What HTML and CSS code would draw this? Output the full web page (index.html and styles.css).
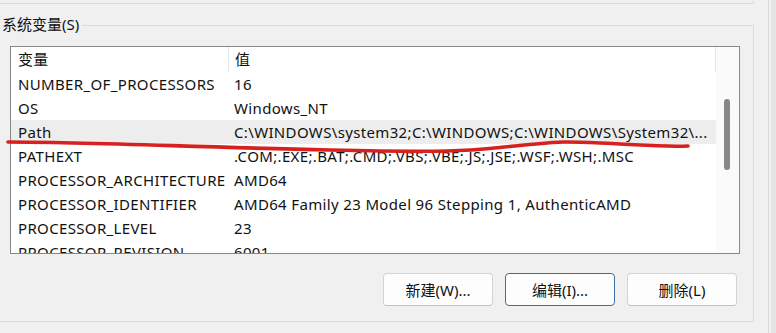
FILE: index.html
```html
<!DOCTYPE html>
<html lang="zh-CN">
<head>
<meta charset="utf-8">
<title>系统变量</title>
<link rel="stylesheet" href="styles.css">
</head>
<body>
<div class="page">
  <div class="content">
    <div class="prev-edge"></div>
    <div class="group">
      <div class="group-head">
        <span class="group-label">系统变量(S)</span>
        <div class="group-rule"></div>
      </div>
      <div class="group-body">
        <div class="list">
          <div class="list-main">
            <div class="row head">
              <div class="cell name">变量</div>
              <div class="cell value">值</div>
            </div>
            <div class="row"><div class="cell name">NUMBER_OF_PROCESSORS</div><div class="cell value">16</div></div>
            <div class="row"><div class="cell name">OS</div><div class="cell value">Windows_NT</div></div>
            <div class="row selected"><div class="cell name">Path</div><div class="cell value">C:\WINDOWS\system32;C:\WINDOWS;C:\WINDOWS\System32\...</div></div>
            <div class="row"><div class="cell name">PATHEXT</div><div class="cell value">.COM;.EXE;.BAT;.CMD;.VBS;.VBE;.JS;.JSE;.WSF;.WSH;.MSC</div></div>
            <div class="row"><div class="cell name">PROCESSOR_ARCHITECTURE</div><div class="cell value">AMD64</div></div>
            <div class="row"><div class="cell name">PROCESSOR_IDENTIFIER</div><div class="cell value">AMD64 Family 23 Model 96 Stepping 1, AuthenticAMD</div></div>
            <div class="row"><div class="cell name">PROCESSOR_LEVEL</div><div class="cell value">23</div></div>
            <div class="row"><div class="cell name">PROCESSOR_REVISION</div><div class="cell value">6001</div></div>
          </div>
          <div class="scrollbar"><div class="thumb"></div></div>
        </div>
        <div class="buttons">
          <button class="btn">新建(W)...</button>
          <button class="btn focused">编辑(I)...</button>
          <button class="btn">删除(L)</button>
        </div>
      </div>
    </div>
  </div>
  <div class="sep"></div>
  <div class="strip"></div>
</div>
<svg class="annotation" width="776" height="333" viewBox="0 0 776 333">
  <path d="M8 142 C 90 142, 190 147, 330 150 S 470 150, 515 146 S 555 141, 600 143 S 660 147, 688 146" fill="none" stroke="#d8211f" stroke-width="3.6" stroke-linecap="round"/>
</svg>
</body>
</html>
```

FILE: styles.css
```css
html, body {
  margin: 0;
  padding: 0;
}
body {
  width: 776px;
  height: 333px;
  overflow: hidden;
  background: #f0f0f0;
  font-family: "Noto Sans", "Noto Sans CJK SC", sans-serif;
  font-size: 15px;
  color: #111;
  position: relative;
}
.page {
  display: flex;
  height: 333px;
}
.content {
  width: 768px;
}
.sep {
  width: 2px;
  border-left: 1px solid #dadada;
}
.strip {
  flex: 1;
  background: #e4e4e4;
}
.prev-edge {
  width: 753px;
  height: 3px;
  border-bottom: 1px solid #dcdcdc;
  border-right: 1px solid #dcdcdc;
}
.group {
  width: 754px;
  margin-top: 10px;
}
.group-head {
  display: flex;
  height: 21px;
}
.group-label {
  padding-left: 2px;
  line-height: 21px;
  margin-right: 3px;
  white-space: nowrap;
}
.group-rule {
  flex: 1;
  align-self: flex-end;
  height: 9px;
  border-top: 1px solid #dcdcdc;
  border-right: 1px solid #dcdcdc;
}
.group-body {
  border-right: 1px solid #dcdcdc;
  border-bottom: 1px solid #dcdcdc;
  padding: 11px 0 15px 10px;
}
.list {
  display: flex;
  width: 728px;
  height: 206px;
  border: 1px solid #888;
  background: #fff;
  overflow: hidden;
}
.list-main {
  width: 705px;
}
.row {
  display: flex;
  height: 24px;
  align-items: center;
  white-space: nowrap;
  letter-spacing: 0.35px;
}
.row.head {
  height: 25px;
}
.row.selected {
  background: #ededed;
}
.cell.name {
  width: 210px;
  padding-left: 7px;
}
.cell.value {
  flex: 1;
  padding-left: 6px;
}
.row.head .cell {
  height: 25px;
  line-height: 25px;
}
.row.head .cell.name {
  border-right: 1px solid #e6e6e6;
}
.row.head .cell.value {
  border-right: 1px solid #e6e6e6;
}
.scrollbar {
  flex: 1;
  background: #fafafa;
}
.thumb {
  width: 6px;
  height: 71px;
  margin-top: 52px;
  margin-left: 8px;
  border-radius: 3px;
  background: #878787;
}
.buttons {
  display: flex;
  justify-content: flex-end;
  gap: 12px;
  width: 727px;
  margin-top: 19px;
}
.btn {
  width: 110px;
  height: 33px;
  background: #fdfdfd;
  border: 1px solid #d3d3d3;
  border-bottom-color: #c2c2c2;
  border-radius: 4px;
  font-family: "Noto Sans", "Noto Sans CJK SC", sans-serif;
  font-size: 15px;
  color: #111;
  padding: 0;
}
.btn.focused {
  border: 1px solid #3f6fa5;
}
.annotation {
  position: absolute;
  left: 0;
  top: 0;
  pointer-events: none;
}
```
